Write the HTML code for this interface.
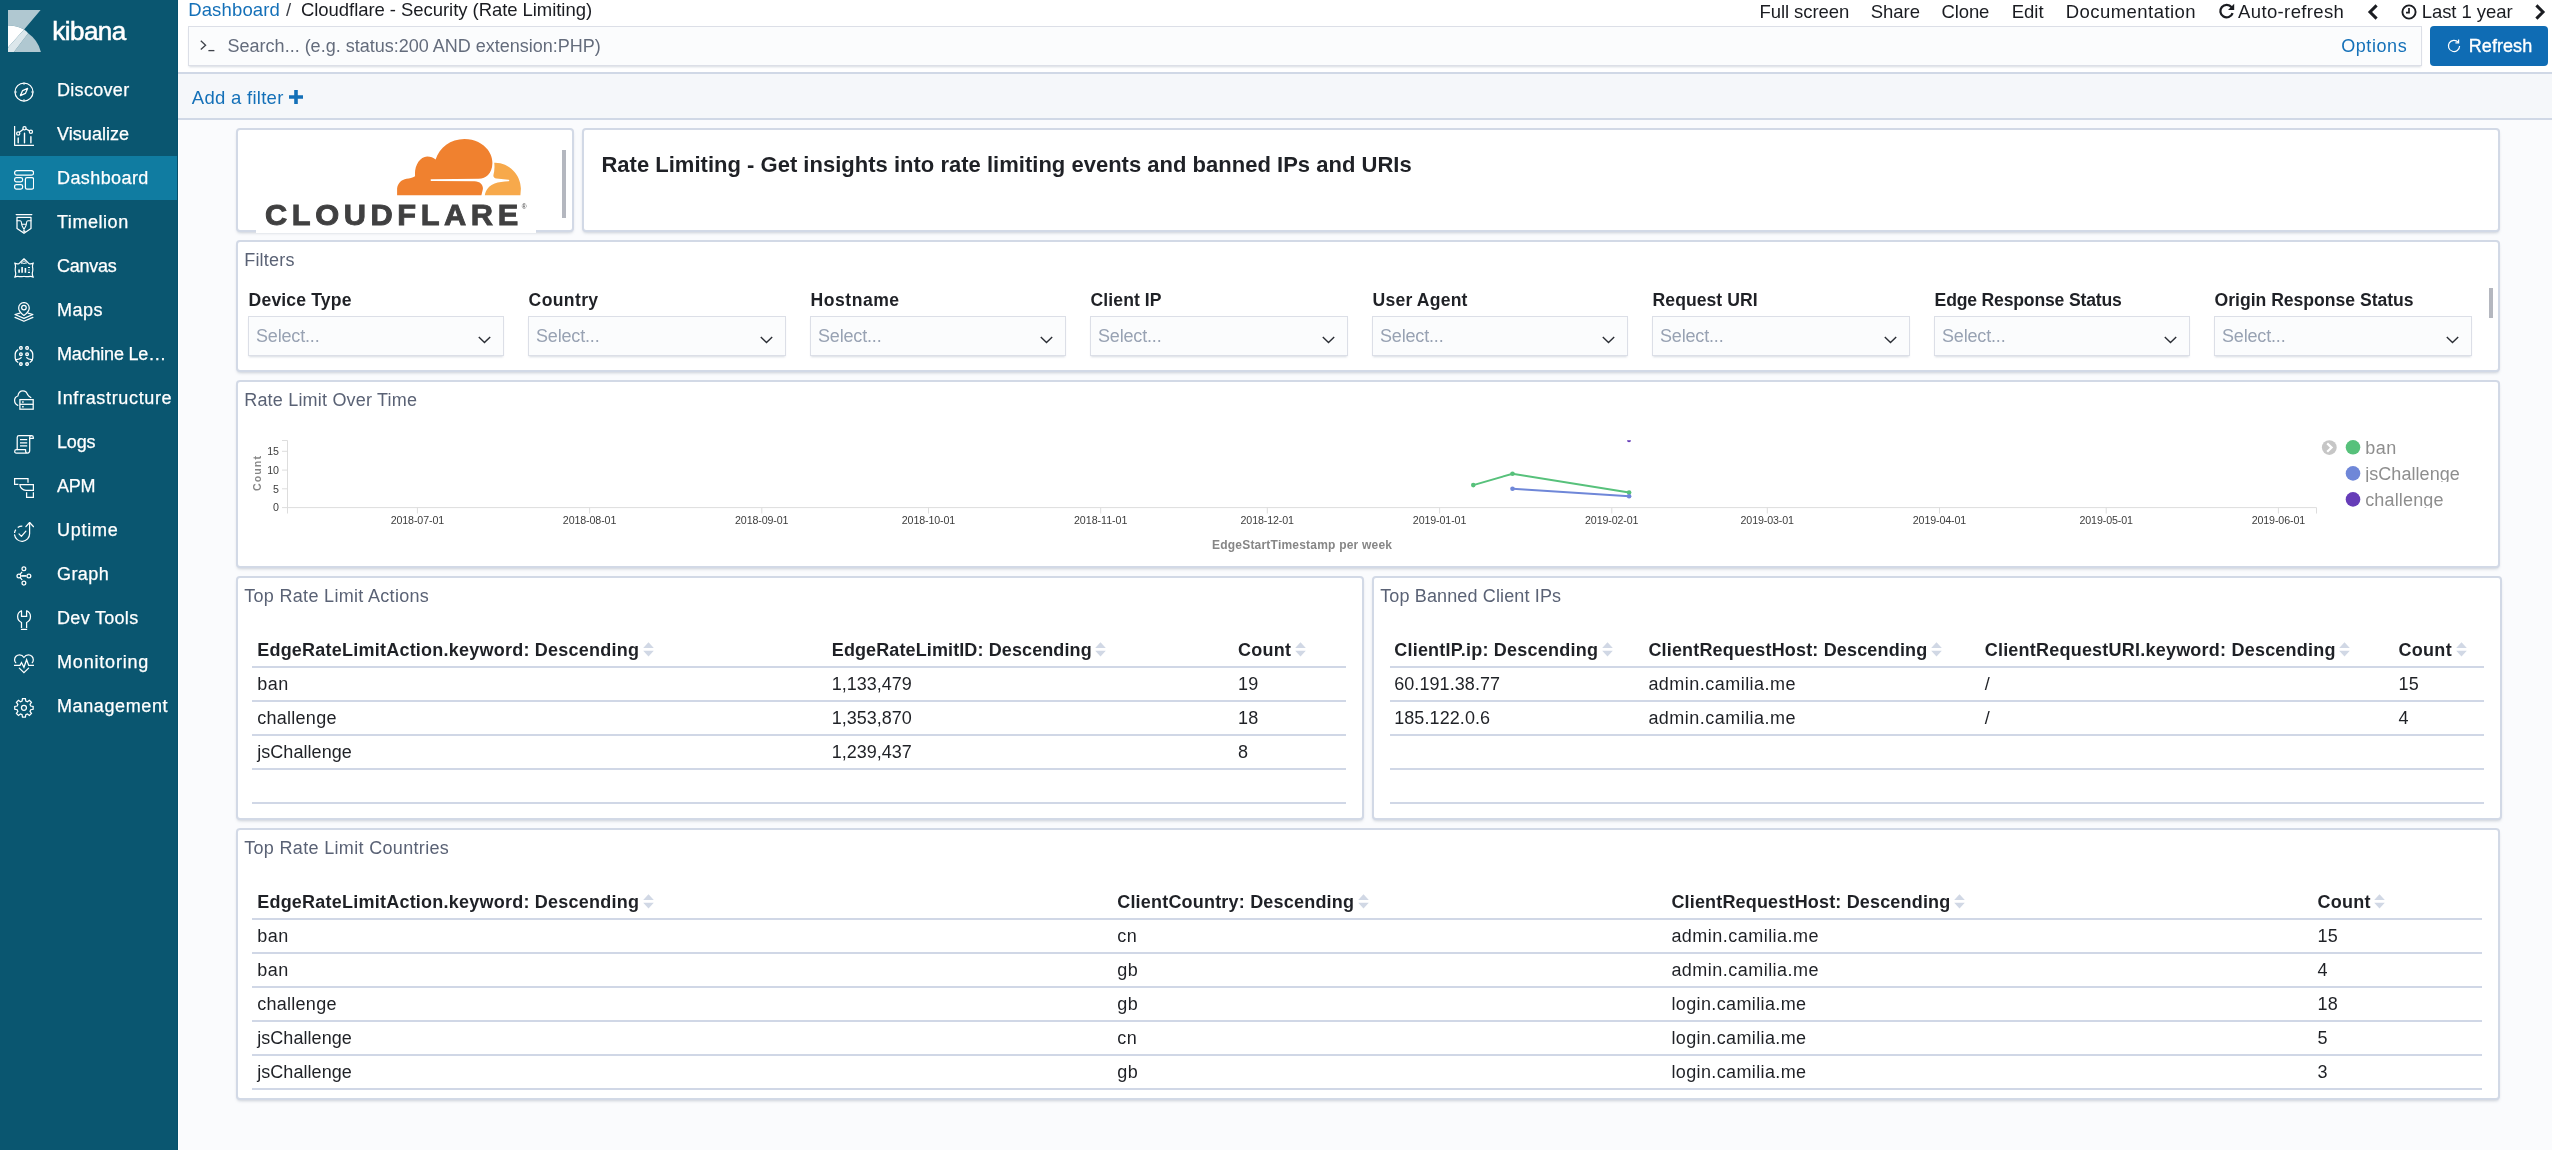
<!DOCTYPE html>
<html lang="en"><head><meta charset="utf-8"><title>Cloudflare - Security (Rate Limiting) - Kibana</title>
<style>
*{box-sizing:border-box;margin:0;padding:0}
html,body{width:2552px;height:1150px;overflow:hidden}
body{position:relative;background:#fafbfd;font-family:"Liberation Sans",Arial,sans-serif;font-size:18px;color:#1a1c21}
.t{position:absolute;white-space:nowrap;display:block}
#nav,#top,#fbar,#dash{will-change:transform}
.abs{position:absolute}
#nav{position:absolute;left:0;top:0;width:178px;height:1150px;background:#0a5670;border-right:1px solid #06506c}
#nav .item{position:absolute;left:0;width:177px;height:44px}
#nav .item.active{background:#107ca1}
#nav svg{position:absolute;left:14px;top:14px;width:20px;height:20px;fill:none;stroke:#fff;stroke-width:1.25;stroke-linecap:round;stroke-linejoin:round}
#edge{position:absolute;left:178px;top:120px;width:1px;height:1030px;background:#fff}
#top{position:absolute;left:178px;top:0;width:2374px;height:72px;background:#fff}
#topline{position:absolute;left:178px;top:72px;width:2374px;height:2px;background:#d0d8e6}
#fbar{position:absolute;left:178px;top:74px;width:2374px;height:44px;background:#f5f7fa}
#fbarline{position:absolute;left:178px;top:118px;width:2374px;height:2px;background:#d0d8e6}
.field{position:absolute;background:#fbfcfd;border:1px solid #dcdfe7;box-shadow:0 2px 2px -1px rgba(152,162,179,.4)}
.panel{position:absolute;background:#fff;border:2px solid #d2d9e6;border-radius:4px;box-shadow:0 2px 3px -1px rgba(140,150,168,.42)}
.hl{position:absolute;height:2px;background:#d0d7e6}
</style></head>
<body>
<nav id="nav">
<svg class="abs" style="left:0;top:0;width:50px;height:60px;stroke:none" viewBox="0 0 50 60">
<path d="M8 10H40.6L24.1 29.4A32.3 32.3 0 0 0 8 25.5Z" fill="#fff" fill-opacity=".68" stroke="none"/>
<path d="M8 25.5A32.3 32.3 0 0 1 24.1 29.4L8 47.4Z" fill="#fff" stroke="none"/>
<path d="M24.1 29.4A32.3 32.3 0 0 1 28.2 33.2L14 51.9H8V47.4Z" fill="#fff" fill-opacity=".86" stroke="none"/>
<path d="M28.2 33.2A32.3 32.3 0 0 1 40.9 51.9H14Z" fill="#fff" fill-opacity=".68" stroke="none"/>
</svg>
<span class="t" style="left:52.2px;top:15px;font-size:26px;line-height:32px;color:#fff;-webkit-text-stroke:0.55px #fff;letter-spacing:-0.504px;">kibana</span>
<a class="item" style="top:68px">
<svg viewBox="0 0 20 20"><circle cx="10" cy="10" r="9"/><path d="M13.6 6.4L11.4 11.4L6.4 13.6L8.6 8.6Z"/><path d="M10 1v1.4M10 17.6V19M1 10h1.4M17.6 10H19" stroke-width="1"/></svg>
<span class="t" style="left:57.0px;top:11px;font-size:18px;line-height:22px;color:#fff;-webkit-text-stroke:0.25px #fff;letter-spacing:0.311px;">Discover</span>
</a>
<a class="item" style="top:112px">
<svg viewBox="0 0 20 20"><path d="M0.6 0.2V19.3H19.8"/><path d="M4.2 12V16.8M10.5 7.2V16.8M16.9 10.8V16.8" stroke-width="1.4"/><circle cx="4.2" cy="7.4" r="1.6"/><circle cx="10.5" cy="2.3" r="1.6"/><circle cx="16.9" cy="5.7" r="1.6"/><path d="M5.4 6.3L9.3 3.3M12 3L15.5 4.9"/></svg>
<span class="t" style="left:57.0px;top:11px;font-size:18px;line-height:22px;color:#fff;-webkit-text-stroke:0.25px #fff;letter-spacing:0.053px;">Visualize</span>
</a>
<a class="item active" style="top:156px">
<svg viewBox="0 0 20 20"><rect x="0.6" y="0.6" width="19" height="4.6" rx="2.2"/><rect x="0.6" y="7.7" width="8" height="4.1" rx="1.8"/><rect x="0.6" y="14.5" width="8" height="4.5" rx="1.8"/><rect x="11.4" y="7.7" width="8.2" height="11.3" rx="1.6"/></svg>
<span class="t" style="left:57.0px;top:11px;font-size:18px;line-height:22px;color:#fff;-webkit-text-stroke:0.25px #fff;letter-spacing:0.415px;">Dashboard</span>
</a>
<a class="item" style="top:200px">
<svg viewBox="0 0 20 20"><path d="M2.2 0.6H17.8"/><path d="M3 3.4H17V14.6L10 19.3L3 14.6Z"/><path d="M3 6.7H6.2C7.7 6.7 7.4 9 7.8 10.8C8.2 12.4 9.4 14 10 15.4C10.6 14 11.8 12.4 12.2 10.8C12.6 9 12.3 6.7 13.8 6.7H17M8 10.3H12" stroke-width="1.1"/><circle cx="10" cy="17.3" r="0.9" stroke-width="1"/></svg>
<span class="t" style="left:57.0px;top:11px;font-size:18px;line-height:22px;color:#fff;-webkit-text-stroke:0.25px #fff;letter-spacing:0.543px;">Timelion</span>
</a>
<a class="item" style="top:244px">
<svg viewBox="0 0 20 20"><path d="M0.7 5C2.4 6.1 3.8 5.9 5 5.6L10 0.8L15 5.6C16.2 5.9 17.6 6.1 19.3 5C18.3 6.8 18.3 8.4 18.7 10C19 11.8 18.7 13.4 18.3 15C18.2 16.5 18.4 17.8 19.3 19.2C17.6 18.2 16 18.3 14.5 18.6C13 18.9 11.5 18.6 10 18.4C8.5 18.6 7 18.9 5.5 18.6C4 18.3 2.4 18.2 0.7 19.2C1.6 17.8 1.8 16.5 1.7 15C1.3 13.4 1 11.8 1.3 10C1.7 8.4 1.7 6.8 0.7 5Z" stroke-width="1.2"/><path d="M7.4 5L10 2.7L12.6 5C11 5.6 9 5.6 7.4 5Z" stroke-width="0.9"/><path d="M5.1 11.4V14.8M8.1 8.9V14.8M11.4 10.1V14.8" stroke-width="1.6" stroke-linecap="butt"/><path d="M13.9 9.5H16M13.9 14.4H16" stroke-width="1.1" stroke-linecap="butt"/><path d="M13.9 11.9H16" stroke-width="1" stroke-opacity=".55" stroke-linecap="butt"/></svg>
<span class="t" style="left:57.0px;top:11px;font-size:18px;line-height:22px;color:#fff;-webkit-text-stroke:0.25px #fff;letter-spacing:-0.255px;">Canvas</span>
</a>
<a class="item" style="top:288px">
<svg viewBox="0 0 20 20"><path d="M9.94 13.4C9.94 13.4 4.65 9.4 4.65 5.9A5.3 5.3 0 0 1 15.25 5.9C15.25 9.4 9.94 13.4 9.94 13.4Z"/><circle cx="9.94" cy="5.6" r="2.3"/><path d="M5.8 11.1L1 12.5L9.94 16.3L18.9 12.5L14.1 11.1M1 15.4L9.94 19.3L18.9 15.4"/></svg>
<span class="t" style="left:57.0px;top:11px;font-size:18px;line-height:22px;color:#fff;-webkit-text-stroke:0.25px #fff;letter-spacing:0.496px;">Maps</span>
</a>
<a class="item" style="top:332px">
<svg viewBox="0 0 20 20"><circle cx="6.9" cy="1.95" r="1.3" stroke-width="1.4"/><circle cx="6.9" cy="8.15" r="1.3" stroke-width="1.4"/><circle cx="6.9" cy="18.05" r="1.3" stroke-width="1.4"/><circle cx="13.07" cy="1.95" r="1.3" stroke-width="1.4"/><circle cx="13.07" cy="8.15" r="1.3" stroke-width="1.4"/><circle cx="13.07" cy="18.05" r="1.3" stroke-width="1.4"/><path d="M3.8 3.9C1.9 5 1.2 6.5 1.2 8.5V12C1.2 13.8 2 15.3 3.8 16.3M2.3 13.6C4.5 13.4 6.3 12.9 7.2 11.6"/><path d="M16.16 3.9C18.06 5 18.76 6.5 18.76 8.5V12C18.76 13.8 17.96 15.3 16.16 16.3M17.66 13.6C15.46 13.4 13.66 12.9 12.76 11.6"/></svg>
<span class="t" style="left:57.0px;top:11px;font-size:18px;line-height:22px;color:#fff;-webkit-text-stroke:0.25px #fff;letter-spacing:-0.188px;">Machine Le…</span>
</a>
<a class="item" style="top:376px">
<svg viewBox="0 0 20 20"><path d="M3.8 15.3C1.8 14.5 0.6 12.5 0.6 10.3C0.6 8.2 2 6.6 3.9 6C4.3 3 6.3 0.8 8.9 0.8C11.3 0.8 13 2.6 13.6 4.6C14.2 6 15.6 6.8 16.8 7.6"/><rect x="5.9" y="9.6" width="13.3" height="9.6" stroke-linejoin="miter"/><path d="M5.9 14.3H19.2" stroke-linecap="butt"/><path d="M8.1 12H9.7M8.1 16.7H9.7" stroke-width="1.5" stroke-linecap="butt"/></svg>
<span class="t" style="left:57.0px;top:11px;font-size:18px;line-height:22px;color:#fff;-webkit-text-stroke:0.25px #fff;letter-spacing:0.661px;">Infrastructure</span>
</a>
<a class="item" style="top:420px">
<svg viewBox="0 0 20 20"><path d="M3.2 15.6V3.4C3.2 2.3 4 1.6 5 1.6H17.5C18.6 1.6 19.3 2.3 19.3 3.2V4.4H15.7"/><path d="M15.7 3.3C15.7 2.3 16.5 1.6 17.5 1.6M15.7 3V16.6C15.7 18 14.8 19.1 13.4 19.1H2.4C1.3 19.1 0.7 18.3 0.7 17.4C0.7 16.4 1.3 15.6 2.4 15.6H11.6C11.4 17.2 11.8 19.1 13.4 19.1"/><path d="M6 5.6H13.2M6 8.8H13.2M6 11.8H13.2" stroke-width="1.3" stroke-linecap="butt"/></svg>
<span class="t" style="left:57.0px;top:11px;font-size:18px;line-height:22px;color:#fff;-webkit-text-stroke:0.25px #fff;letter-spacing:-0.137px;">Logs</span>
</a>
<a class="item" style="top:464px">
<svg viewBox="0 0 20 20"><path d="M14 4.8V0.6H0.6V6.4H4.4" stroke-linecap="butt" stroke-linejoin="miter"/><path d="M5.9 6.5H19.4V12.3H12C8.6 12.3 5.9 9.6 5.9 6.5Z" stroke-linejoin="miter"/><path d="M12.6 14.3V19.4H19.4V14.3" stroke-linecap="butt" stroke-linejoin="miter"/></svg>
<span class="t" style="left:57.0px;top:11px;font-size:18px;line-height:22px;color:#fff;-webkit-text-stroke:0.25px #fff;letter-spacing:-0.239px;">APM</span>
</a>
<a class="item" style="top:508px">
<svg viewBox="0 0 20 20"><path d="M15.6 0.5V11.75A7.55 7.55 0 0 1 0.57 12.8"/><path d="M11.9 4.7L15.6 0.5L19.6 4.7"/><path d="M0.54 10.96A7.55 7.55 0 0 1 1.79 7.53M3.72 5.57A7.55 7.55 0 0 1 8.31 4.2" stroke-linecap="butt"/><path d="M5 11.9L7.4 14.4L11.9 9.2"/></svg>
<span class="t" style="left:57.0px;top:11px;font-size:18px;line-height:22px;color:#fff;-webkit-text-stroke:0.25px #fff;letter-spacing:0.747px;">Uptime</span>
</a>
<a class="item" style="top:552px">
<svg viewBox="0 0 20 20"><circle cx="9.9" cy="2.7" r="1.9"/><circle cx="14.9" cy="9.9" r="1.9"/><circle cx="9.9" cy="17.1" r="1.9"/><circle cx="4.9" cy="9.9" r="1.9"/><path d="M7.3 9.9H12.4" stroke-width="1.7" stroke-linecap="butt"/><path d="M6.2 8.2L7.9 6.2M6.2 11.6L7.9 13.6"/></svg>
<span class="t" style="left:57.0px;top:11px;font-size:18px;line-height:22px;color:#fff;-webkit-text-stroke:0.25px #fff;letter-spacing:0.434px;">Graph</span>
</a>
<a class="item" style="top:596px">
<svg viewBox="0 0 20 20"><path d="M7.5 0.8V6.4H12.6V0.8" stroke-linejoin="miter"/><path d="M7.5 0.72A6.4 6.4 0 0 0 7.5 12.48V17.9M12.6 0.72A6.4 6.4 0 0 1 12.6 12.48V17.9" stroke-linecap="butt"/><path d="M6.9 19.4H13.2" stroke-linecap="butt"/></svg>
<span class="t" style="left:57.0px;top:11px;font-size:18px;line-height:22px;color:#fff;-webkit-text-stroke:0.25px #fff;letter-spacing:0.309px;">Dev Tools</span>
</a>
<a class="item" style="top:640px">
<svg viewBox="0 0 20 20"><path d="M1.7 8.7C0.9 7.8 0.6 6.8 0.6 5.7C0.6 3 2.8 0.8 5.5 0.8C7.4 0.8 9 1.9 9.94 3.5C10.9 1.9 12.5 0.8 14.4 0.8C17.1 0.8 19.3 3 19.3 5.7C19.3 6.8 19 7.8 18.3 8.7"/><path d="M0.3 11.4H6L7.5 8.5L9.94 13.3L12.6 5.7L14.7 11.4H19.7" stroke-linejoin="miter"/><path d="M5.3 14.1L9.94 18.6L14.6 14.1" stroke-linejoin="miter"/></svg>
<span class="t" style="left:57.0px;top:11px;font-size:18px;line-height:22px;color:#fff;-webkit-text-stroke:0.25px #fff;letter-spacing:0.815px;">Monitoring</span>
</a>
<a class="item" style="top:684px">
<svg viewBox="0 0 20 20"><circle cx="9.94" cy="9.87" r="2.5"/><path d="M8.07 3.12L8.49 0.68L11.39 0.68L11.81 3.12L13.39 3.78L15.41 2.35L17.46 4.40L16.03 6.42L16.69 8.00L19.13 8.42L19.13 11.32L16.69 11.74L16.03 13.32L17.46 15.34L15.41 17.39L13.39 15.96L11.81 16.62L11.39 19.06L8.49 19.06L8.07 16.62L6.49 15.96L4.47 17.39L2.42 15.34L3.85 13.32L3.19 11.74L0.75 11.32L0.75 8.42L3.19 8.00L3.85 6.42L2.42 4.40L4.47 2.35L6.49 3.78Z" stroke-linejoin="miter"/></svg>
<span class="t" style="left:57.0px;top:11px;font-size:18px;line-height:22px;color:#fff;-webkit-text-stroke:0.25px #fff;letter-spacing:0.612px;">Management</span>
</a>
</nav><div id="edge"></div>
<header id="top">
<span class="t" style="left:10.2px;top:-2px;font-size:18.5px;line-height:23px;color:#1470b8;letter-spacing:0.143px;">Dashboard</span>
<span class="t" style="left:108.0px;top:-2px;font-size:18.5px;line-height:23px;color:#3b3f47;letter-spacing:0.859px;">/</span>
<span class="t" style="left:123.0px;top:-2px;font-size:18.5px;line-height:23px;color:#1a1c21;letter-spacing:-0.055px;">Cloudflare - Security (Rate Limiting)</span>
<span class="t" style="left:1581.6px;top:0px;font-size:18.5px;line-height:23px;color:#1a1c21;letter-spacing:-0.089px;">Full screen</span>
<span class="t" style="left:1692.8px;top:0px;font-size:18.5px;line-height:23px;color:#1a1c21;letter-spacing:-0.055px;">Share</span>
<span class="t" style="left:1763.5px;top:0px;font-size:18.5px;line-height:23px;color:#1a1c21;letter-spacing:-0.109px;">Clone</span>
<span class="t" style="left:1833.7px;top:0px;font-size:18.5px;line-height:23px;color:#1a1c21;letter-spacing:0.027px;">Edit</span>
<span class="t" style="left:1887.8px;top:0px;font-size:18.5px;line-height:23px;color:#1a1c21;letter-spacing:0.443px;">Documentation</span>
<span class="t" style="left:2060.1px;top:0px;font-size:18.5px;line-height:23px;color:#1a1c21;letter-spacing:0.359px;">Auto-refresh</span>
<span class="t" style="left:2243.7px;top:0px;font-size:18.5px;line-height:23px;color:#1a1c21;letter-spacing:-0.066px;">Last 1 year</span>
<svg class="abs" style="left:2039.5px;top:3px" width="17" height="17" viewBox="0 0 17 17"><path d="M13.6 4.2A6.3 6.3 0 1 0 14.6 10.2" fill="none" stroke="#1a1c21" stroke-width="2.3"/><path d="M16.2 0.8V7H10Z" fill="#1a1c21"/></svg><svg class="abs" style="left:2189.0px;top:3.5px" width="12" height="16" viewBox="0 0 12 16"><path d="M9.6 1.4L3 8L9.6 14.6" fill="none" stroke="#1a1c21" stroke-width="3"/></svg><svg class="abs" style="left:2222.7px;top:3.5px" width="16" height="16" viewBox="0 0 16 16"><circle cx="8" cy="8" r="6.6" fill="none" stroke="#1a1c21" stroke-width="1.9"/><path d="M8 4V8.6H5" fill="none" stroke="#1a1c21" stroke-width="1.7"/></svg><svg class="abs" style="left:2356.0px;top:3.5px" width="12" height="16" viewBox="0 0 12 16"><path d="M2.4 1.4L9 8L2.4 14.6" fill="none" stroke="#1a1c21" stroke-width="3"/></svg>
<div class="field" style="left:10px;top:26px;width:2234px;height:40px">
<svg class="abs" style="left:11.4px;top:13.0px" width="16" height="12" viewBox="0 0 16 12"><path d="M0.8 0.8L5.6 5.2L0.8 9.6" fill="none" stroke="#3f434b" stroke-width="1.3"/><path d="M8.4 10.6H14.4" fill="none" stroke="#3f434b" stroke-width="1.3"/></svg>
<span class="t" style="left:38.6px;top:8px;font-size:18px;line-height:22px;color:#646c7c;letter-spacing:0.000px;">Search... (e.g. status:200 AND extension:PHP)</span>
<span class="t" style="left:2152.2px;top:8px;font-size:18px;line-height:22px;color:#1470b8;letter-spacing:0.579px;">Options</span>
</div>
<div class="abs" style="left:2252px;top:26px;width:118px;height:40px;background:#0f6cb4;border-radius:4px">
<svg class="abs" style="left:17.0px;top:13.0px" width="14" height="14" viewBox="0 0 14 14"><path d="M11.2 3.2A5.6 5.6 0 1 0 12.6 7" fill="none" stroke="#fff" stroke-width="1.2"/><path d="M11.6 0.6V3.8H8.4" fill="none" stroke="#fff" stroke-width="1.2"/></svg>
<span class="t" style="left:38.8px;top:9px;font-size:18px;line-height:22px;color:#fff;-webkit-text-stroke:0.35px #fff;letter-spacing:0.053px;">Refresh</span>
</div>
</header><div id="topline"></div>
<div id="fbar">
<span class="t" style="left:13.8px;top:12px;font-size:18.5px;line-height:23px;color:#1470b8;letter-spacing:0.280px;">Add a filter</span>
<svg class="abs" style="left:110.6px;top:16.2px" width="14" height="14" viewBox="0 0 14 14"><path d="M5.2 0h3.6v5.2H14v3.6H8.8V14H5.2V8.8H0V5.2h5.2z" fill="#1470b8"/></svg>
</div><div id="fbarline"></div>
<main id="dash">
<section class="panel" style="left:236px;top:128px;width:338px;height:104px;">
<div class="abs" style="left:18px;top:95px;width:280px;height:8px;background:#fff"></div>
<svg class="abs" style="left:152px;top:4px" width="140" height="66" viewBox="390 134 140 66">
<path d="M397.1 195.2 V188.5 C397.6 183.5 401.5 179.6 406.5 178.8 C409.5 178.3 412.5 177.6 415.1 176.2 C414 166.5 419.5 156.4 427.2 156.4 C430.6 156.4 433.4 157.6 435.6 159.6 C439.5 147.5 450.5 139 464.5 139 C480.5 139 492.6 150.2 492.4 163.2 C492.3 168.5 490.6 172.2 488.2 174.8 C486 177.2 482.6 178.6 478.6 178.7 L431.2 179.3 C430.3 179.3 430.3 180.9 431.2 180.9 L474.6 181.3 C480.6 181.5 483.6 185.5 482.8 189.6 L481.4 195.2 Z" fill="#f0812f"/>
<path d="M494.2 162.8 C508.5 162.2 520.6 174.2 520.9 188.5 L520.4 195.2 H484.8 C485.6 190.8 488.4 185.6 494.6 183.4 C498.6 182.2 503.4 181.6 508.6 181.3 C509.5 181.2 509.5 179.8 508.6 179.7 L496.4 178.6 C494.4 178.4 493.2 177 493.4 175.2 C494.4 171.4 494.8 167.2 494.2 162.8 Z" fill="#f7a94b"/>
</svg>
<span class="t" style="left:26.6px;top:67px;font-size:29.6px;line-height:35px;font-weight:700;color:#404041;transform:translateY(-0.4px) scaleX(1.04);transform-origin:0 0;-webkit-text-stroke:0.9px #404041;letter-spacing:4.400px;">CLOUDFLARE</span>
<span class="t" style="left:283.8px;top:72px;font-size:6.5px;line-height:9px;color:#404041;">®</span>
<div class="abs" style="left:324px;top:20px;width:4px;height:68px;background:#b4b7bf"></div>
</section>
<section class="panel" style="left:582px;top:128px;width:1918px;height:104px;">
<h3 class="t" style="left:17.4px;top:21px;font-size:22px;line-height:27px;font-weight:700;color:#1f2126;letter-spacing:0.014px;">Rate Limiting - Get insights into rate limiting events and banned IPs and URIs</h3>
</section>
<section class="panel" style="left:236px;top:240px;width:2264px;height:132px;">
<span class="t" style="left:6.2px;top:7px;font-size:18px;line-height:22px;color:#5a6275;letter-spacing:0.200px;">Filters</span>
<label class="t" style="left:10.6px;top:47px;font-size:17.6px;line-height:22px;font-weight:700;color:#1f2126;letter-spacing:0.146px;">Device Type</label>
<div class="field" style="left:10px;top:74px;width:256px;height:40px">
<span class="t" style="left:7.0px;top:8px;font-size:18px;line-height:22px;color:#98a2b3;letter-spacing:-0.170px;">Select...</span>
<svg class="abs" style="left:229.4px;top:19px" width="13" height="8" viewBox="0 0 13 8"><path d="M0.8 0.9L6.5 6.6L12.2 0.9" fill="none" stroke="#2a2d34" stroke-width="1.4"/></svg>
</div>
<label class="t" style="left:290.6px;top:47px;font-size:17.6px;line-height:22px;font-weight:700;color:#1f2126;letter-spacing:0.352px;">Country</label>
<div class="field" style="left:290px;top:74px;width:258px;height:40px">
<span class="t" style="left:7.0px;top:8px;font-size:18px;line-height:22px;color:#98a2b3;letter-spacing:-0.170px;">Select...</span>
<svg class="abs" style="left:231.4px;top:19px" width="13" height="8" viewBox="0 0 13 8"><path d="M0.8 0.9L6.5 6.6L12.2 0.9" fill="none" stroke="#2a2d34" stroke-width="1.4"/></svg>
</div>
<label class="t" style="left:572.6px;top:47px;font-size:17.6px;line-height:22px;font-weight:700;color:#1f2126;letter-spacing:0.492px;">Hostname</label>
<div class="field" style="left:572px;top:74px;width:256px;height:40px">
<span class="t" style="left:7.0px;top:8px;font-size:18px;line-height:22px;color:#98a2b3;letter-spacing:-0.170px;">Select...</span>
<svg class="abs" style="left:229.4px;top:19px" width="13" height="8" viewBox="0 0 13 8"><path d="M0.8 0.9L6.5 6.6L12.2 0.9" fill="none" stroke="#2a2d34" stroke-width="1.4"/></svg>
</div>
<label class="t" style="left:852.6px;top:47px;font-size:17.6px;line-height:22px;font-weight:700;color:#1f2126;letter-spacing:0.068px;">Client IP</label>
<div class="field" style="left:852px;top:74px;width:258px;height:40px">
<span class="t" style="left:7.0px;top:8px;font-size:18px;line-height:22px;color:#98a2b3;letter-spacing:-0.170px;">Select...</span>
<svg class="abs" style="left:231.4px;top:19px" width="13" height="8" viewBox="0 0 13 8"><path d="M0.8 0.9L6.5 6.6L12.2 0.9" fill="none" stroke="#2a2d34" stroke-width="1.4"/></svg>
</div>
<label class="t" style="left:1134.6px;top:47px;font-size:17.6px;line-height:22px;font-weight:700;color:#1f2126;letter-spacing:0.180px;">User Agent</label>
<div class="field" style="left:1134px;top:74px;width:256px;height:40px">
<span class="t" style="left:7.0px;top:8px;font-size:18px;line-height:22px;color:#98a2b3;letter-spacing:-0.170px;">Select...</span>
<svg class="abs" style="left:229.4px;top:19px" width="13" height="8" viewBox="0 0 13 8"><path d="M0.8 0.9L6.5 6.6L12.2 0.9" fill="none" stroke="#2a2d34" stroke-width="1.4"/></svg>
</div>
<label class="t" style="left:1414.6px;top:47px;font-size:17.6px;line-height:22px;font-weight:700;color:#1f2126;letter-spacing:0.036px;">Request URI</label>
<div class="field" style="left:1414px;top:74px;width:258px;height:40px">
<span class="t" style="left:7.0px;top:8px;font-size:18px;line-height:22px;color:#98a2b3;letter-spacing:-0.170px;">Select...</span>
<svg class="abs" style="left:231.4px;top:19px" width="13" height="8" viewBox="0 0 13 8"><path d="M0.8 0.9L6.5 6.6L12.2 0.9" fill="none" stroke="#2a2d34" stroke-width="1.4"/></svg>
</div>
<label class="t" style="left:1696.6px;top:47px;font-size:17.6px;line-height:22px;font-weight:700;color:#1f2126;letter-spacing:-0.183px;">Edge Response Status</label>
<div class="field" style="left:1696px;top:74px;width:256px;height:40px">
<span class="t" style="left:7.0px;top:8px;font-size:18px;line-height:22px;color:#98a2b3;letter-spacing:-0.170px;">Select...</span>
<svg class="abs" style="left:229.4px;top:19px" width="13" height="8" viewBox="0 0 13 8"><path d="M0.8 0.9L6.5 6.6L12.2 0.9" fill="none" stroke="#2a2d34" stroke-width="1.4"/></svg>
</div>
<label class="t" style="left:1976.6px;top:47px;font-size:17.6px;line-height:22px;font-weight:700;color:#1f2126;letter-spacing:-0.020px;">Origin Response Status</label>
<div class="field" style="left:1976px;top:74px;width:258px;height:40px">
<span class="t" style="left:7.0px;top:8px;font-size:18px;line-height:22px;color:#98a2b3;letter-spacing:-0.170px;">Select...</span>
<svg class="abs" style="left:231.4px;top:19px" width="13" height="8" viewBox="0 0 13 8"><path d="M0.8 0.9L6.5 6.6L12.2 0.9" fill="none" stroke="#2a2d34" stroke-width="1.4"/></svg>
</div>
<div class="abs" style="left:2251px;top:46px;width:4px;height:30px;background:#b4b7bf"></div>
</section>
<section class="panel" style="left:236px;top:380px;width:2264px;height:188px;">
<span class="t" style="left:6.2px;top:7px;font-size:18px;line-height:22px;color:#5a6275;letter-spacing:0.198px;">Rate Limit Over Time</span>
<svg class="abs" style="left:0;top:0" width="2260" height="184" viewBox="238 382 2260 184" font-family='"Liberation Sans",Arial,sans-serif'>
<g stroke="#dddddd" stroke-width="1" fill="none">
<path d="M282 440.5H287.5V513.5"/>
<path d="M287.5 507.6H2316.5V513.5"/>
<path d="M282 507.6H287.5"/>
<path d="M282 488.8H287.5"/>
<path d="M282 470.1H287.5"/>
<path d="M282 451.3H287.5"/>
<path d="M417.4 507.6V513.5"/>
<path d="M589.6 507.6V513.5"/>
<path d="M761.8 507.6V513.5"/>
<path d="M928.5 507.6V513.5"/>
<path d="M1100.7 507.6V513.5"/>
<path d="M1267.3 507.6V513.5"/>
<path d="M1439.6 507.6V513.5"/>
<path d="M1611.8 507.6V513.5"/>
<path d="M1767.3 507.6V513.5"/>
<path d="M1939.5 507.6V513.5"/>
<path d="M2106.2 507.6V513.5"/>
<path d="M2278.4 507.6V513.5"/>
</g>
<g font-size="10.67" fill="#3d3d3d">
<text x="279" y="511.4" text-anchor="end">0</text>
<text x="279" y="492.6" text-anchor="end">5</text>
<text x="279" y="473.9" text-anchor="end">10</text>
<text x="279" y="455.1" text-anchor="end">15</text>
<text x="417.4" y="524.2" text-anchor="middle" textLength="53.5" lengthAdjust="spacing">2018-07-01</text>
<text x="589.6" y="524.2" text-anchor="middle" textLength="53.5" lengthAdjust="spacing">2018-08-01</text>
<text x="761.8" y="524.2" text-anchor="middle" textLength="53.5" lengthAdjust="spacing">2018-09-01</text>
<text x="928.5" y="524.2" text-anchor="middle" textLength="53.5" lengthAdjust="spacing">2018-10-01</text>
<text x="1100.7" y="524.2" text-anchor="middle" textLength="53.5" lengthAdjust="spacing">2018-11-01</text>
<text x="1267.3" y="524.2" text-anchor="middle" textLength="53.5" lengthAdjust="spacing">2018-12-01</text>
<text x="1439.6" y="524.2" text-anchor="middle" textLength="53.5" lengthAdjust="spacing">2019-01-01</text>
<text x="1611.8" y="524.2" text-anchor="middle" textLength="53.5" lengthAdjust="spacing">2019-02-01</text>
<text x="1767.3" y="524.2" text-anchor="middle" textLength="53.5" lengthAdjust="spacing">2019-03-01</text>
<text x="1939.5" y="524.2" text-anchor="middle" textLength="53.5" lengthAdjust="spacing">2019-04-01</text>
<text x="2106.2" y="524.2" text-anchor="middle" textLength="53.5" lengthAdjust="spacing">2019-05-01</text>
<text x="2278.4" y="524.2" text-anchor="middle" textLength="53.5" lengthAdjust="spacing">2019-06-01</text>
</g>
<text transform="translate(260.6 473.5) rotate(-90)" text-anchor="middle" font-size="10.67" font-weight="700" fill="#868686" textLength="35" lengthAdjust="spacing">Count</text>
<text x="1302" y="548.6" text-anchor="middle" font-size="12" font-weight="700" fill="#868686" textLength="180" lengthAdjust="spacing">EdgeStartTimestamp per week</text>
<path d="M1473.3 485.1L1512.5 473.8L1629.1 492.6" fill="none" stroke="#57c17b" stroke-width="2"/>
<circle cx="1473.3" cy="485.1" r="2.3" fill="#57c17b"/>
<circle cx="1512.5" cy="473.8" r="2.3" fill="#57c17b"/>
<circle cx="1629.1" cy="492.6" r="2.3" fill="#57c17b"/>
<path d="M1512.5 488.8L1629.1 496.3" fill="none" stroke="#6f87d8" stroke-width="2"/>
<circle cx="1512.5" cy="488.8" r="2.3" fill="#6f87d8"/>
<circle cx="1629.1" cy="496.3" r="2.3" fill="#6f87d8"/>
<path d="M1627 440.2A2 2 0 0 0 1631 440.2Z" fill="#663db8"/>
<circle cx="2329.3" cy="447.6" r="7.4" fill="#c6c6c6"/><path d="M2327.2 443.4L2331.6 447.6L2327.2 451.8" fill="none" stroke="#fff" stroke-width="2.2"/>
<circle cx="2353" cy="447.3" r="7.3" fill="#57c17b"/>
<circle cx="2353" cy="473.4" r="7.3" fill="#6f87d8"/>
<circle cx="2353" cy="499.4" r="7.3" fill="#663db8"/>
</svg>
<div class="abs" style="left:2122px;top:50px;width:120px;height:24px;overflow:hidden">
<span class="t" style="left:5.2px;top:5px;font-size:18px;line-height:22px;color:#8e8e8e;letter-spacing:0.484px;">ban</span>
</div>
<div class="abs" style="left:2122px;top:76px;width:120px;height:24px;overflow:hidden">
<span class="t" style="left:5.2px;top:5px;font-size:18px;line-height:22px;color:#8e8e8e;letter-spacing:0.058px;">jsChallenge</span>
</div>
<div class="abs" style="left:2122px;top:102px;width:120px;height:24px;overflow:hidden">
<span class="t" style="left:5.2px;top:5px;font-size:18px;line-height:22px;color:#8e8e8e;letter-spacing:0.160px;">challenge</span>
</div>
</section>
<section class="panel" style="left:236px;top:576px;width:1128px;height:244px;">
<span class="t" style="left:6.2px;top:7px;font-size:18px;line-height:22px;color:#5a6275;letter-spacing:0.314px;">Top Rate Limit Actions</span>
<span class="t" style="left:19.2px;top:61px;font-size:18px;line-height:22px;font-weight:700;color:#1f2126;letter-spacing:0.229px;">EdgeRateLimitAction.keyword: Descending</span>
<svg class="abs" style="left:404.8px;top:64.1px" width="11" height="15" viewBox="0 0 11 15"><path d="M0.2 5.9L5.5 0.2L10.8 5.9Z M0.2 8.8L5.5 14.5L10.8 8.8Z" fill="#d1d8e5"/></svg>
<span class="t" style="left:593.8px;top:61px;font-size:18px;line-height:22px;font-weight:700;color:#1f2126;letter-spacing:0.109px;">EdgeRateLimitID: Descending</span>
<svg class="abs" style="left:857.4px;top:64.1px" width="11" height="15" viewBox="0 0 11 15"><path d="M0.2 5.9L5.5 0.2L10.8 5.9Z M0.2 8.8L5.5 14.5L10.8 8.8Z" fill="#d1d8e5"/></svg>
<span class="t" style="left:999.9px;top:61px;font-size:18px;line-height:22px;font-weight:700;color:#1f2126;letter-spacing:0.263px;">Count</span>
<svg class="abs" style="left:1056.8px;top:64.1px" width="11" height="15" viewBox="0 0 11 15"><path d="M0.2 5.9L5.5 0.2L10.8 5.9Z M0.2 8.8L5.5 14.5L10.8 8.8Z" fill="#d1d8e5"/></svg>
<div class="hl" style="left:14px;top:88px;width:1094px"></div>
<div class="hl" style="left:14px;top:122px;width:1094px"></div>
<div class="hl" style="left:14px;top:156px;width:1094px"></div>
<div class="hl" style="left:14px;top:190px;width:1094px"></div>
<div class="hl" style="left:14px;top:224px;width:1094px"></div>
<span class="t" style="left:19.2px;top:95px;font-size:18px;line-height:22px;color:#1f2126;letter-spacing:0.484px;">ban</span>
<span class="t" style="left:593.8px;top:95px;font-size:18px;line-height:22px;color:#1f2126;letter-spacing:-0.009px;">1,133,479</span>
<span class="t" style="left:999.9px;top:95px;font-size:18px;line-height:22px;color:#1f2126;letter-spacing:0.234px;">19</span>
<span class="t" style="left:19.2px;top:129px;font-size:18px;line-height:22px;color:#1f2126;letter-spacing:0.271px;">challenge</span>
<span class="t" style="left:593.8px;top:129px;font-size:18px;line-height:22px;color:#1f2126;letter-spacing:-0.009px;">1,353,870</span>
<span class="t" style="left:999.9px;top:129px;font-size:18px;line-height:22px;color:#1f2126;letter-spacing:0.234px;">18</span>
<span class="t" style="left:19.2px;top:163px;font-size:18px;line-height:22px;color:#1f2126;letter-spacing:0.058px;">jsChallenge</span>
<span class="t" style="left:593.8px;top:163px;font-size:18px;line-height:22px;color:#1f2126;letter-spacing:-0.009px;">1,239,437</span>
<span class="t" style="left:999.9px;top:163px;font-size:18px;line-height:22px;color:#1f2126;letter-spacing:0.484px;">8</span>
</section>
<section class="panel" style="left:1372px;top:576px;width:1130px;height:244px;">
<span class="t" style="left:6.2px;top:7px;font-size:18px;line-height:22px;color:#5a6275;letter-spacing:0.137px;">Top Banned Client IPs</span>
<span class="t" style="left:20.2px;top:61px;font-size:18px;line-height:22px;font-weight:700;color:#1f2126;letter-spacing:0.230px;">ClientIP.ip: Descending</span>
<svg class="abs" style="left:227.8px;top:64.1px" width="11" height="15" viewBox="0 0 11 15"><path d="M0.2 5.9L5.5 0.2L10.8 5.9Z M0.2 8.8L5.5 14.5L10.8 8.8Z" fill="#d1d8e5"/></svg>
<span class="t" style="left:274.4px;top:61px;font-size:18px;line-height:22px;font-weight:700;color:#1f2126;letter-spacing:0.171px;">ClientRequestHost: Descending</span>
<svg class="abs" style="left:557.0px;top:64.1px" width="11" height="15" viewBox="0 0 11 15"><path d="M0.2 5.9L5.5 0.2L10.8 5.9Z M0.2 8.8L5.5 14.5L10.8 8.8Z" fill="#d1d8e5"/></svg>
<span class="t" style="left:610.7px;top:61px;font-size:18px;line-height:22px;font-weight:700;color:#1f2126;letter-spacing:0.220px;">ClientRequestURI.keyword: Descending</span>
<svg class="abs" style="left:965.3px;top:64.1px" width="11" height="15" viewBox="0 0 11 15"><path d="M0.2 5.9L5.5 0.2L10.8 5.9Z M0.2 8.8L5.5 14.5L10.8 8.8Z" fill="#d1d8e5"/></svg>
<span class="t" style="left:1024.6px;top:61px;font-size:18px;line-height:22px;font-weight:700;color:#1f2126;letter-spacing:0.263px;">Count</span>
<svg class="abs" style="left:1081.5px;top:64.1px" width="11" height="15" viewBox="0 0 11 15"><path d="M0.2 5.9L5.5 0.2L10.8 5.9Z M0.2 8.8L5.5 14.5L10.8 8.8Z" fill="#d1d8e5"/></svg>
<div class="hl" style="left:16px;top:88px;width:1094px"></div>
<div class="hl" style="left:16px;top:122px;width:1094px"></div>
<div class="hl" style="left:16px;top:156px;width:1094px"></div>
<div class="hl" style="left:16px;top:190px;width:1094px"></div>
<div class="hl" style="left:16px;top:224px;width:1094px"></div>
<span class="t" style="left:20.2px;top:95px;font-size:18px;line-height:22px;color:#1f2126;letter-spacing:0.074px;">60.191.38.77</span>
<span class="t" style="left:274.4px;top:95px;font-size:18px;line-height:22px;color:#1f2126;letter-spacing:0.472px;">admin.camilia.me</span>
<span class="t" style="left:610.7px;top:95px;font-size:18px;line-height:22px;color:#1f2126;letter-spacing:1.984px;">/</span>
<span class="t" style="left:1024.6px;top:95px;font-size:18px;line-height:22px;color:#1f2126;letter-spacing:0.234px;">15</span>
<span class="t" style="left:20.2px;top:129px;font-size:18px;line-height:22px;color:#1f2126;letter-spacing:0.082px;">185.122.0.6</span>
<span class="t" style="left:274.4px;top:129px;font-size:18px;line-height:22px;color:#1f2126;letter-spacing:0.472px;">admin.camilia.me</span>
<span class="t" style="left:610.7px;top:129px;font-size:18px;line-height:22px;color:#1f2126;letter-spacing:1.984px;">/</span>
<span class="t" style="left:1024.6px;top:129px;font-size:18px;line-height:22px;color:#1f2126;letter-spacing:0.984px;">4</span>
</section>
<section class="panel" style="left:236px;top:828px;width:2264px;height:272px;">
<span class="t" style="left:6.2px;top:7px;font-size:18px;line-height:22px;color:#5a6275;letter-spacing:0.329px;">Top Rate Limit Countries</span>
<span class="t" style="left:19.2px;top:61px;font-size:18px;line-height:22px;font-weight:700;color:#1f2126;letter-spacing:0.229px;">EdgeRateLimitAction.keyword: Descending</span>
<svg class="abs" style="left:404.8px;top:64.1px" width="11" height="15" viewBox="0 0 11 15"><path d="M0.2 5.9L5.5 0.2L10.8 5.9Z M0.2 8.8L5.5 14.5L10.8 8.8Z" fill="#d1d8e5"/></svg>
<span class="t" style="left:879.2px;top:61px;font-size:18px;line-height:22px;font-weight:700;color:#1f2126;letter-spacing:0.199px;">ClientCountry: Descending</span>
<svg class="abs" style="left:1119.8px;top:64.1px" width="11" height="15" viewBox="0 0 11 15"><path d="M0.2 5.9L5.5 0.2L10.8 5.9Z M0.2 8.8L5.5 14.5L10.8 8.8Z" fill="#d1d8e5"/></svg>
<span class="t" style="left:1433.4px;top:61px;font-size:18px;line-height:22px;font-weight:700;color:#1f2126;letter-spacing:0.171px;">ClientRequestHost: Descending</span>
<svg class="abs" style="left:1716.0px;top:64.1px" width="11" height="15" viewBox="0 0 11 15"><path d="M0.2 5.9L5.5 0.2L10.8 5.9Z M0.2 8.8L5.5 14.5L10.8 8.8Z" fill="#d1d8e5"/></svg>
<span class="t" style="left:2079.4px;top:61px;font-size:18px;line-height:22px;font-weight:700;color:#1f2126;letter-spacing:0.263px;">Count</span>
<svg class="abs" style="left:2136.3px;top:64.1px" width="11" height="15" viewBox="0 0 11 15"><path d="M0.2 5.9L5.5 0.2L10.8 5.9Z M0.2 8.8L5.5 14.5L10.8 8.8Z" fill="#d1d8e5"/></svg>
<div class="hl" style="left:14px;top:88px;width:2230px"></div>
<div class="hl" style="left:14px;top:122px;width:2230px"></div>
<div class="hl" style="left:14px;top:156px;width:2230px"></div>
<div class="hl" style="left:14px;top:190px;width:2230px"></div>
<div class="hl" style="left:14px;top:224px;width:2230px"></div>
<div class="hl" style="left:14px;top:258px;width:2230px"></div>
<span class="t" style="left:19.2px;top:95px;font-size:18px;line-height:22px;color:#1f2126;letter-spacing:0.484px;">ban</span>
<span class="t" style="left:879.2px;top:95px;font-size:18px;line-height:22px;color:#1f2126;letter-spacing:0.492px;">cn</span>
<span class="t" style="left:1433.4px;top:95px;font-size:18px;line-height:22px;color:#1f2126;letter-spacing:0.472px;">admin.camilia.me</span>
<span class="t" style="left:2079.4px;top:95px;font-size:18px;line-height:22px;color:#1f2126;letter-spacing:0.234px;">15</span>
<span class="t" style="left:19.2px;top:129px;font-size:18px;line-height:22px;color:#1f2126;letter-spacing:0.484px;">ban</span>
<span class="t" style="left:879.2px;top:129px;font-size:18px;line-height:22px;color:#1f2126;letter-spacing:0.484px;">gb</span>
<span class="t" style="left:1433.4px;top:129px;font-size:18px;line-height:22px;color:#1f2126;letter-spacing:0.472px;">admin.camilia.me</span>
<span class="t" style="left:2079.4px;top:129px;font-size:18px;line-height:22px;color:#1f2126;letter-spacing:0.984px;">4</span>
<span class="t" style="left:19.2px;top:163px;font-size:18px;line-height:22px;color:#1f2126;letter-spacing:0.271px;">challenge</span>
<span class="t" style="left:879.2px;top:163px;font-size:18px;line-height:22px;color:#1f2126;letter-spacing:0.484px;">gb</span>
<span class="t" style="left:1433.4px;top:163px;font-size:18px;line-height:22px;color:#1f2126;letter-spacing:0.371px;">login.camilia.me</span>
<span class="t" style="left:2079.4px;top:163px;font-size:18px;line-height:22px;color:#1f2126;letter-spacing:0.234px;">18</span>
<span class="t" style="left:19.2px;top:197px;font-size:18px;line-height:22px;color:#1f2126;letter-spacing:0.058px;">jsChallenge</span>
<span class="t" style="left:879.2px;top:197px;font-size:18px;line-height:22px;color:#1f2126;letter-spacing:0.492px;">cn</span>
<span class="t" style="left:1433.4px;top:197px;font-size:18px;line-height:22px;color:#1f2126;letter-spacing:0.371px;">login.camilia.me</span>
<span class="t" style="left:2079.4px;top:197px;font-size:18px;line-height:22px;color:#1f2126;letter-spacing:0.484px;">5</span>
<span class="t" style="left:19.2px;top:231px;font-size:18px;line-height:22px;color:#1f2126;letter-spacing:0.058px;">jsChallenge</span>
<span class="t" style="left:879.2px;top:231px;font-size:18px;line-height:22px;color:#1f2126;letter-spacing:0.484px;">gb</span>
<span class="t" style="left:1433.4px;top:231px;font-size:18px;line-height:22px;color:#1f2126;letter-spacing:0.371px;">login.camilia.me</span>
<span class="t" style="left:2079.4px;top:231px;font-size:18px;line-height:22px;color:#1f2126;letter-spacing:0.484px;">3</span>
</section>
</main>
</body></html>
